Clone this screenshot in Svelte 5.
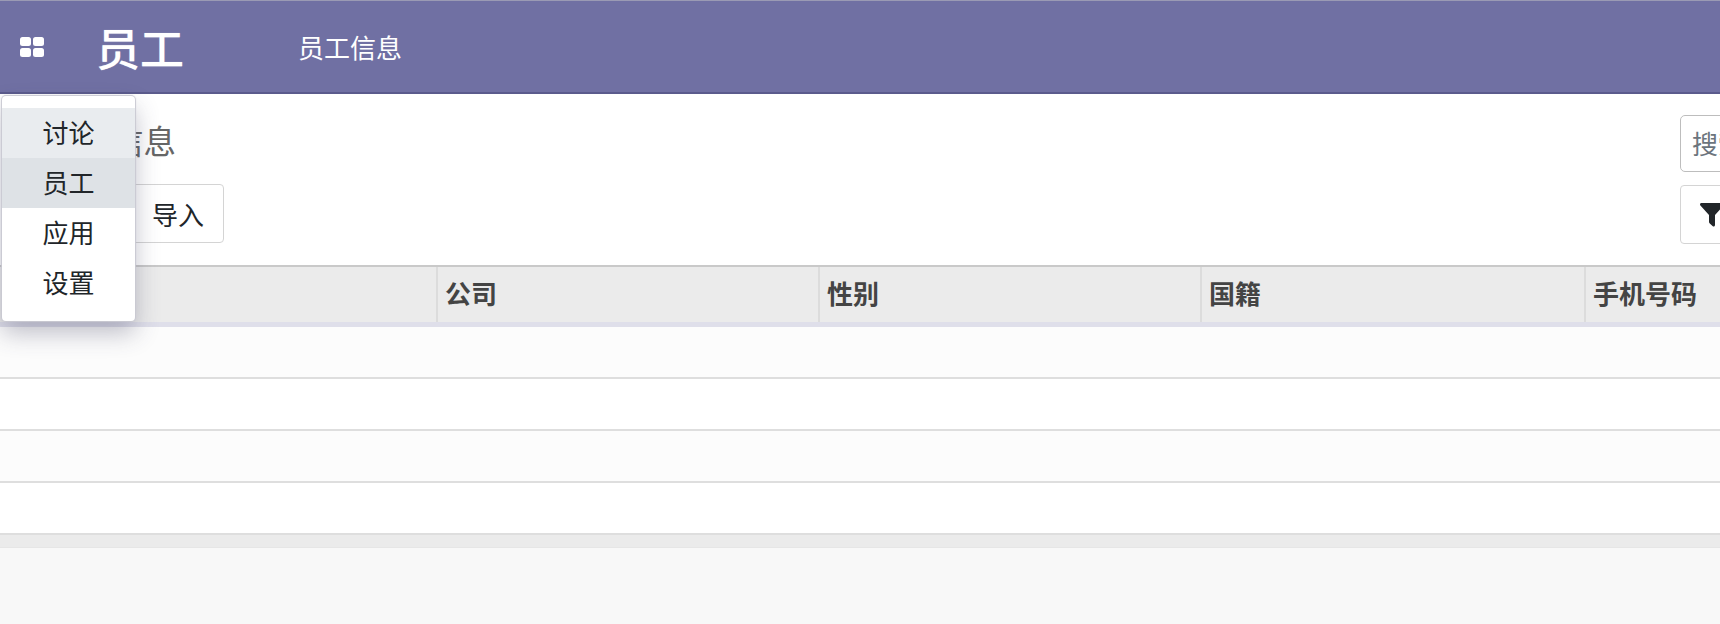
<script>
  const menu = [
    { label: '讨论', cls: 'hover' },
    { label: '员工', cls: 'active' },
    { label: '应用', cls: '' },
    { label: '设置', cls: '' }
  ];
  const columns = [
    { label: '', width: 438 },
    { label: '公司', width: 382 },
    { label: '性别', width: 382 },
    { label: '国籍', width: 384 },
    { label: '手机号码', width: 134 }
  ];
  const rows = [0, 1, 2, 3];
</script>

<div class="page">
  <div class="top-line"></div>
  <header class="navbar">
    <button class="apps" aria-label="应用">
      <svg width="26" height="22" viewBox="0 0 26 22">
        <rect x="1" y="1" width="11" height="9" rx="2.5" />
        <rect x="14" y="1" width="11" height="9" rx="2.5" />
        <rect x="1" y="12" width="11" height="9" rx="2.5" />
        <rect x="14" y="12" width="11" height="9" rx="2.5" />
      </svg>
    </button>
    <span class="brand">员工</span>
    <span class="nav-link">员工信息</span>
  </header>

  <section class="control">
    <div class="left">
      <h1>员工信息</h1>
      <div class="buttons">
        <button class="btn primary">创建</button>
        <button class="btn">导入</button>
      </div>
    </div>
    <div class="right">
      <div class="search">搜索...</div>
      <button class="btn filter">
        <svg width="26" height="24" viewBox="0 0 26 24">
          <path d="M1 1.5C1 .7 1.6 0 2.4 0h21.2c.8 0 1.4.7 1.4 1.5 0 .4-.2.8-.4 1L16 12v10c0 .8-.6 1.500-1.300 1.500-.3 0-.6-.1-.9-.3l-3-2.600c-.5-.4-.8-1-.8-1.600V12L1.400 2.500C1.200 2.300 1 1.900 1 1.500z" />
        </svg>
        筛选
      </button>
    </div>
  </section>

  <div class="table">
    <div class="thead">
      {#each columns as c}
        <div class="th" style="width:{c.width}px">{c.label}</div>
      {/each}
    </div>
    {#each rows as r}
      <div class="tr" class:odd={r % 2 === 0}></div>
    {/each}
  </div>
  <div class="tfoot"></div>

  <nav class="dropdown">
    {#each menu as m}
      <div class="item {m.cls}">{m.label}</div>
    {/each}
  </nav>
</div>

<style>
  :global(body) {
    margin: 0;
    background: #f8f8f8;
  }
  .page {
    position: relative;
    width: 1720px;
    height: 624px;
    overflow: hidden;
    background: #f8f8f8;
    font-family: "Noto Sans CJK SC", "Liberation Sans", sans-serif;
  }
  .top-line {
    height: 1px;
    background: #9a9ab4;
  }
  .navbar {
    display: flex;
    align-items: center;
    height: 93px;
    box-sizing: border-box;
    border-bottom: 2px solid #5b5b8c;
    background: #7070a3;
    color: #fff;
  }
  .apps {
    display: flex;
    padding: 0;
    margin-left: 19px;
    border: 0;
    background: none;
  }
  .apps rect {
    fill: #fff;
  }
  .brand {
    margin-left: 51px;
    font-size: 44px;
    font-weight: 500;
    line-height: 1;
    text-shadow: 0 0 1px rgba(255, 255, 255, 0.5);
  }
  .nav-link {
    margin-left: 114px;
    font-size: 26px;
    line-height: 1;
  }
  .control {
    display: flex;
    justify-content: space-between;
    height: 171px;
    box-sizing: border-box;
    padding-top: 21px;
    background: #fff;
  }
  .left {
    padding-left: 46px;
  }
  h1 {
    margin: 0;
    height: 69px;
    font-size: 32.500px;
    font-weight: 400;
    line-height: 50px;
    color: #666;
  }
  .buttons {
    display: flex;
    gap: 8px;
  }
  .btn {
    height: 59px;
    box-sizing: border-box;
    padding: 0 19px;
    border: 1px solid #d4d4d4;
    border-radius: 4px;
    background: #fff;
    color: #212529;
    font: inherit;
    font-size: 26px;
  }
  .primary {
    width: 90px;
    padding: 0;
    margin-right: -12px;
    background: #7070a3;
    color: #fff;
  }
  .right {
    display: flex;
    flex-direction: column;
    gap: 13px;
    width: 40px;
    overflow: hidden;
  }
  .search {
    flex: none;
    width: 300px;
    height: 57px;
    box-sizing: border-box;
    padding-left: 11px;
    border: 1.500px solid #bdbdbd;
    border-radius: 5px;
    color: #6c757d;
    font-size: 26px;
    line-height: 53px;
  }
  .filter {
    display: flex;
    flex: none;
    align-items: center;
    gap: 6px;
    width: 200px;
    padding-left: 18px;
    text-align: left;
  }
  .filter svg {
    flex: none;
    fill: #212529;
  }
  .table {
    background: #fff;
  }
  .thead {
    display: flex;
    height: 62px;
    box-sizing: border-box;
    border-top: 2px solid #c9c9c9;
    border-bottom: 5px solid #dfdfea;
    background: #ebebeb;
  }
  .th {
    flex: none;
    box-sizing: border-box;
    padding-left: 7px;
    border-right: 2px solid #dcdcdc;
    color: #444;
    font-size: 26px;
    font-weight: 700;
    line-height: 52px;
  }
  .th:last-child {
    border-right: 0;
  }
  .tr {
    height: 52px;
    box-sizing: border-box;
    border-bottom: 2px solid #dedede;
    background: #fff;
  }
  .tr.odd {
    background: #fcfcfc;
  }
  .tfoot {
    height: 12px;
    border-bottom: 1px solid #e6e6e6;
    background: #ebebeb;
  }
  .dropdown {
    position: absolute;
    top: 96px;
    left: 2px;
    width: 133px;
    height: 225px;
    box-sizing: border-box;
    padding: 12px 0;
    border-radius: 4px;
    background: #fff;
    box-shadow: 0 0 1px 1px #c9c9d2, 0 12px 24px rgba(60, 60, 90, 0.32);
  }
  .item {
    height: 50px;
    color: #212529;
    font-size: 26px;
    line-height: 48px;
    text-align: center;
  }
  .item.hover {
    background: #e9ecef;
  }
  .item.active {
    background: #dee2e6;
  }
</style>
